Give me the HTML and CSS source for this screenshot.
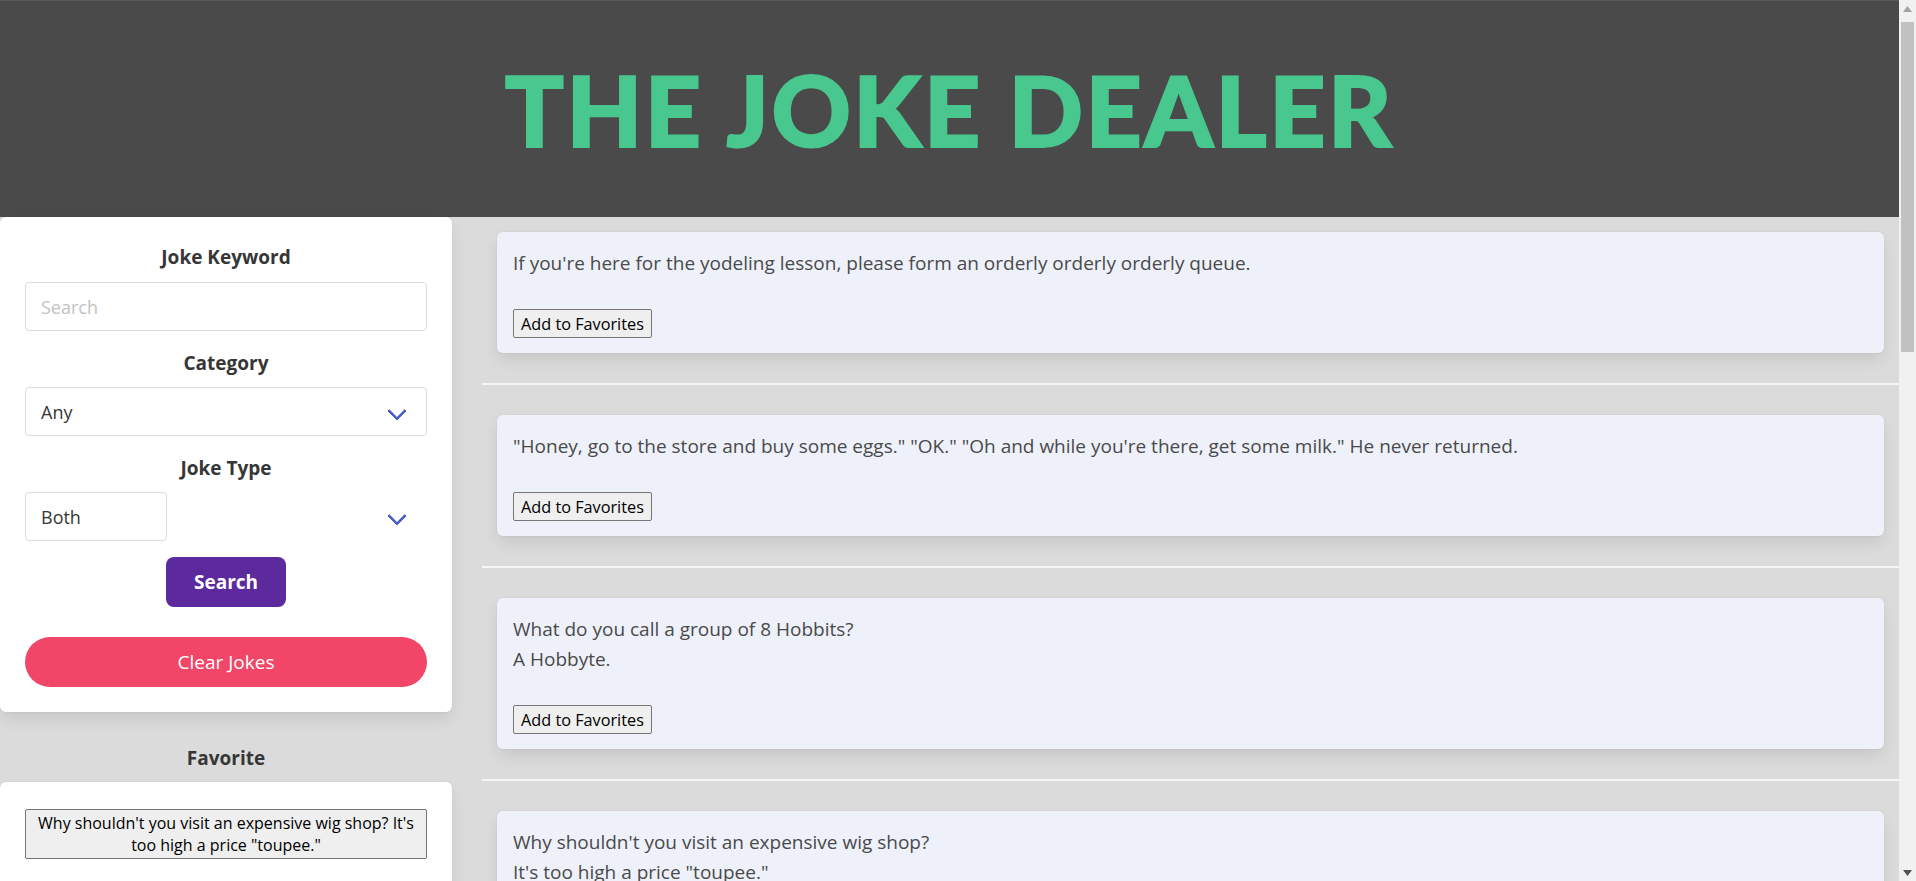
FILE: index.html
```html
<!DOCTYPE html>
<html lang="en">
<head>
<meta charset="utf-8">
<title>The Joke Dealer</title>
<link rel="stylesheet" href="styles.css">
</head>
<body>
<header class="hero">
  <h1 class="title">THE JOKE DEALER</h1>
</header>
<div class="layout">
  <aside class="sidebar">
    <div class="panel search-panel">
      <label class="label" for="kw">Joke Keyword</label>
      <input id="kw" class="input" type="text" placeholder="Search">
      <label class="label" for="cat">Category</label>
      <div class="select full"><select id="cat"><option>Any</option></select></div>
      <label class="label" for="type">Joke Type</label>
      <div class="select"><select id="type"><option>Both</option></select></div>
      <button class="btn-search">Search</button>
      <button class="btn-clear">Clear Jokes</button>
    </div>
    <h2 class="fav-title">Favorite</h2>
    <div class="panel fav-panel">
      <button class="fav-item">Why shouldn't you visit an expensive wig shop? It's too high a price "toupee."</button>
    </div>
  </aside>
  <main class="jokes">
    <article class="joke">
      <p>If you're here for the yodeling lesson, please form an orderly orderly orderly queue.</p>
      <button class="add">Add to Favorites</button>
    </article>
    <hr class="sep">
    <article class="joke">
      <p>"Honey, go to the store and buy some eggs." "OK." "Oh and while you're there, get some milk." He never returned.</p>
      <button class="add">Add to Favorites</button>
    </article>
    <hr class="sep">
    <article class="joke">
      <p>What do you call a group of 8 Hobbits?</p>
      <p>A Hobbyte.</p>
      <button class="add">Add to Favorites</button>
    </article>
    <hr class="sep">
    <article class="joke">
      <p>Why shouldn't you visit an expensive wig shop?</p>
      <p>It's too high a price "toupee."</p>
      <button class="add">Add to Favorites</button>
    </article>
    <hr class="sep">
    <article class="joke">
      <p>Why do programmers prefer dark mode?</p>
      <p>Because light attracts bugs.</p>
      <button class="add">Add to Favorites</button>
    </article>
    <hr class="sep">
    <article class="joke">
      <p>I've got a really good UDP joke to tell you but I don't know if you'll get it.</p>
      <button class="add">Add to Favorites</button>
    </article>
    <hr class="sep">
    <article class="joke">
      <p>What's the best thing about a Boolean?</p>
      <p>Even if you're wrong, you're only off by a bit.</p>
      <button class="add">Add to Favorites</button>
    </article>
    <hr class="sep">
    <article class="joke">
      <p>A SQL statement walks into a bar and sees two tables. It approaches, and asks "may I join you?"</p>
      <button class="add">Add to Favorites</button>
    </article>
    <hr class="sep">
    <article class="joke">
      <p>Why did the scarecrow win an award?</p>
      <p>Because he was outstanding in his field.</p>
      <button class="add">Add to Favorites</button>
    </article>
    <hr class="sep">
    <article class="joke">
      <p>I would tell you a joke about construction, but I'm still working on it.</p>
      <button class="add">Add to Favorites</button>
    </article>
    <hr class="sep">
    <article class="joke">
      <p>How many programmers does it take to change a light bulb?</p>
      <p>None, that's a hardware problem.</p>
      <button class="add">Add to Favorites</button>
    </article>
  </main>
</div>
<div class="scrollbar" aria-hidden="true">
  <div class="sb-btn">
    <svg width="9" height="6" viewBox="0 0 9 6"><path d="M0 6 L4.5 0 L9 6 Z" fill="#a3a3a3"/></svg>
  </div>
  <div class="sb-track"><div class="sb-thumb"></div></div>
  <div class="sb-btn">
    <svg width="9" height="6" viewBox="0 0 9 6"><path d="M0 0 L4.5 6 L9 0 Z" fill="#505050"/></svg>
  </div>
</div>
</body>
</html>
```

FILE: styles.css
```css
* { box-sizing: border-box; }

html { background: #dbdbdb; }

body {
  margin: 0;
  padding-right: 17px;
  background: #dbdbdb;
  font-family: "Open Sans", "Noto Sans", sans-serif;
  color: #4a4a4a;
}

/* imitation of the browser's classic scrollbar */
.scrollbar {
  position: fixed;
  top: 0;
  right: 0;
  bottom: 0;
  width: 17px;
  display: flex;
  flex-direction: column;
  background: #f1f1f1;
}
.sb-btn {
  height: 17px;
  display: flex;
  align-items: center;
  justify-content: center;
}
.sb-track { flex: 1; padding: 5px 2px 0; }
.sb-thumb { height: 330px; background: #c1c1c1; }

.hero {
  height: 217px;
  background: #4a4a4a;
  border-top: 1px solid #5a5a5a;
  display: flex;
  align-items: center;
  justify-content: center;
}

.title {
  margin: 0;
  font-family: "Lato", "Liberation Sans", sans-serif;
  font-weight: 900;
  font-size: 98px;
  line-height: 1;
  color: #48c78e;
  -webkit-text-stroke: 2px #48c78e;
  letter-spacing: 2.5px;
  padding-top: 0;
}

.layout {
  display: grid;
  grid-template-columns: 452px 1fr;
  column-gap: 30px;
  align-items: start;
}

.panel {
  background: #fff;
  border-radius: 6px;
  box-shadow: 0 8px 16px -2px rgba(10, 10, 10, 0.1), 0 0 0 1px rgba(10, 10, 10, 0.02);
}

.search-panel {
  display: flex;
  flex-direction: column;
  padding: 25px 25px 25px;
}

.label {
  display: block;
  text-align: center;
  font-weight: 700;
  font-size: 19px;
  line-height: 30px;
  color: #363636;
}

.input,
.select select {
  height: 49px;
  border: 1px solid #dbdbdb;
  border-radius: 4px;
  background: #fff;
  padding: 0 15px;
  font-family: "Open Sans", "Noto Sans", sans-serif;
  font-size: 18px;
  color: #363636;
}

.input { width: 100%; margin-top: 10px; }
.input::placeholder { color: #c2c2c2; }

.select {
  position: relative;
  margin-top: 9px;
}
.select select {
  appearance: none;
  -webkit-appearance: none;
  width: 142px;
  padding-right: 30px;
}
.select.full select { width: 100%; }
.select + .label { margin-top: 17px; }
.input + .label { margin-top: 17px; }

.select::after {
  content: "";
  position: absolute;
  right: 23px;
  top: 50%;
  width: 11px;
  height: 11px;
  margin-top: -8px;
  border: 3px solid #485fc7;
  border-top: 0;
  border-right: 0;
  border-radius: 1px;
  transform: rotate(-45deg);
  pointer-events: none;
}

.btn-search {
  align-self: center;
  width: 120px;
  height: 50px;
  margin-top: 16px;
  border: 0;
  border-radius: 8px;
  background: #5c2a9d;
  color: #fff;
  font-family: "Open Sans", "Noto Sans", sans-serif;
  font-weight: 700;
  font-size: 19px;
}

.btn-clear {
  width: 100%;
  height: 50px;
  margin-top: 30px;
  border: 0;
  border-radius: 25px;
  background: #f14668;
  color: #fff;
  font-family: "Open Sans", "Noto Sans", sans-serif;
  font-size: 19px;
}

.fav-title {
  margin: 31px 0 0;
  text-align: center;
  font-size: 19px;
  font-weight: 700;
  line-height: 30px;
  color: #363636;
}

.fav-panel {
  margin-top: 9px;
  padding: 27px 25px 30px;
  min-height: 120px;
}

.fav-item {
  display: block;
  width: 100%;
  min-height: 50px;
  padding: 2px 6px;
  background: #efefef;
  border: 1px solid #767676;
  border-radius: 2px;
  font-family: "Open Sans", "Noto Sans", sans-serif;
  font-size: 16px;
  line-height: 22px;
  color: #000;
}

.jokes {
  display: flex;
  flex-direction: column;
  gap: 30px;
  padding: 15px 0 40px;
}

.joke {
  margin: 0 15px;
  background: #eef1fa;
  border-radius: 6px;
  padding: 16px 16px 15px;
  box-shadow: 0 8px 16px -2px rgba(10, 10, 10, 0.1), 0 0 0 1px rgba(10, 10, 10, 0.02);
}

.joke p {
  margin: 0;
  font-size: 19px;
  line-height: 30px;
  color: #4a4a4a;
}

.add {
  display: block;
  margin-top: 31px;
  height: 29px;
  padding: 0 7px;
  background: #efefef;
  border: 1px solid #767676;
  border-radius: 2px;
  font-family: "Open Sans", "Noto Sans", sans-serif;
  font-size: 16.25px;
  color: #000;
}

.sep {
  margin: 0;
  height: 2px;
  border: 0;
  background: #f5f5f5;
}
```
